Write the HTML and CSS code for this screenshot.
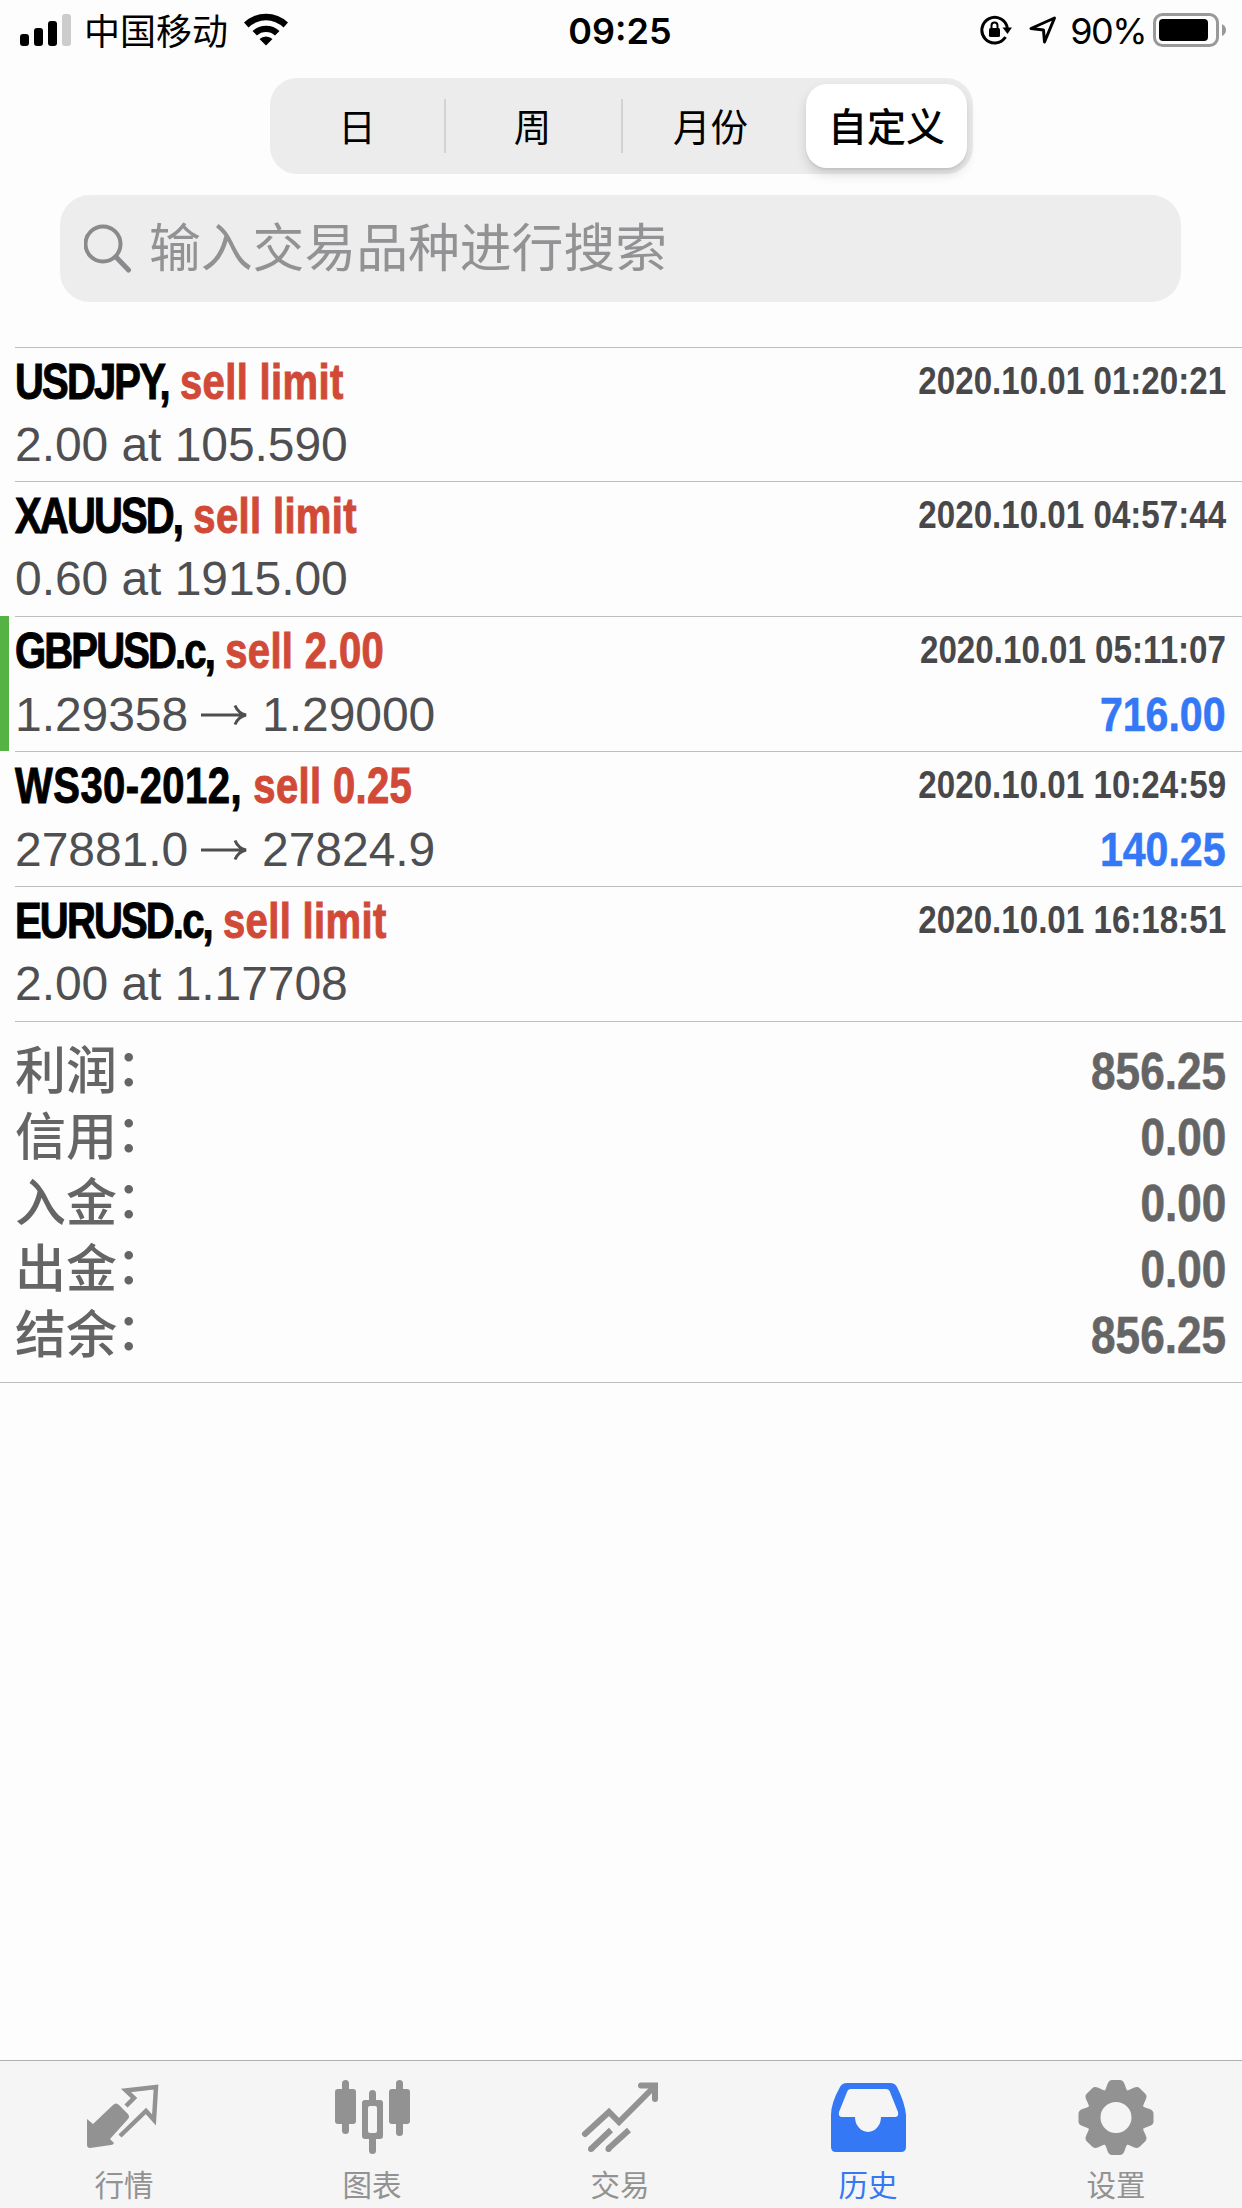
FILE: index.html
```html
<!DOCTYPE html>
<html lang="zh-CN">
<head>
<meta charset="utf-8">
<title>历史</title>
<link rel="stylesheet" href="styles.css">
</head>
<body>
<div class="app">
  <header class="status">
    <div class="status-side">
      <svg class="signal" width="52" height="34" viewBox="0 0 52 34"><rect x="0" y="21" width="9" height="12" rx="3"/><rect x="14" y="15" width="9" height="18" rx="3"/><rect x="28" y="8" width="9" height="25" rx="3"/><rect x="42" y="1" width="9" height="32" rx="3" fill="#ccc"/></svg>
      <span class="carrier">中国移动</span>
      <svg class="wifi" width="46" height="34" viewBox="0 0 46 34"><path d="M1 9.500A32 32 0 0 1 45 9.500L40.500 14.500A25 25 0 0 0 5.500 14.500ZM9.500 18A20 20 0 0 1 36.500 18L32 22.500A13.500 13.500 0 0 0 14 22.500ZM16.500 26A9.500 9.500 0 0 1 29.500 26L23 32.500Z"/></svg>
    </div>
    <div class="clock">09:25</div>
    <div class="status-side right">
      <svg width="33" height="30" viewBox="0 0 33 30"><path d="M25.500 22A12.800 12.800 0 1 1 27.300 13" fill="none" stroke="#000" stroke-width="3"/><path d="M22.500 12.500H32L27.500 19Z"/><rect x="9" y="13" width="11" height="9" rx="1.500"/><path d="M11.500 13V10.500a3 3 0 0 1 6 0V13" fill="none" stroke="#000" stroke-width="2"/></svg>
      <svg class="location" width="28" height="28" viewBox="0 0 28 28"><path d="M2 12.500L25.500 2L15.500 26L14.500 14Z" fill="none" stroke="#000" stroke-width="3" stroke-linejoin="round"/></svg>
      <span class="percent">90%</span>
      <svg class="battery" width="75" height="34" viewBox="0 0 75 34"><rect x="1.500" y="1.500" width="63" height="31" rx="8" fill="none" stroke="#999" stroke-width="3"/><rect x="6" y="6" width="49" height="22" rx="4"/><path d="M69 11q4 2 4 6t-4 6Z" fill="#999"/></svg>
    </div>
  </header>

  <nav class="segments">
    <span class="segment">日</span>
    <span class="segment divided">周</span>
    <span class="segment divided">月份</span>
    <span class="segment selected">自定义</span>
  </nav>

  <div class="search">
    <svg width="50" height="50" viewBox="0 0 50 50"><circle cx="19" cy="20" r="17.500" fill="none" stroke="#8a8a8d" stroke-width="4"/><path d="M32 33L44.500 46" stroke="#8a8a8d" stroke-width="5" stroke-linecap="round"/></svg>
    <span>输入交易品种进行搜索</span>
  </div>

  <main class="deals">
    <article class="deal">
      <div class="line head"><span class="title"><b class="symbol">USDJPY,</b> <b class="side">sell limit</b></span><time>2020.10.01 01:20:21</time></div>
      <div class="line prices"><span>2.00 at 105.590</span></div>
    </article>
    <article class="deal">
      <div class="line head"><span class="title"><b class="symbol">XAUUSD,</b> <b class="side">sell limit</b></span><time>2020.10.01 04:57:44</time></div>
      <div class="line prices"><span>0.60 at 1915.00</span></div>
    </article>
    <article class="deal marked">
      <div class="line head"><span class="title"><b class="symbol">GBPUSD.c,</b> <b class="side">sell 2.00</b></span><time>2020.10.01 05:11:07</time></div>
      <div class="line prices"><span>1.29358<svg class="arrow" width="46" height="22" viewBox="0 0 46 22"><path d="M0 11H44M34 1.500Q37 9 45 11Q37 13 34 20.500"/></svg>1.29000</span><strong class="profit">716.00</strong></div>
    </article>
    <article class="deal">
      <div class="line head"><span class="title"><b class="symbol wide">WS30-2012,</b> <b class="side">sell 0.25</b></span><time>2020.10.01 10:24:59</time></div>
      <div class="line prices"><span>27881.0<svg class="arrow" width="46" height="22" viewBox="0 0 46 22"><path d="M0 11H44M34 1.500Q37 9 45 11Q37 13 34 20.500"/></svg>27824.9</span><strong class="profit">140.25</strong></div>
    </article>
    <article class="deal">
      <div class="line head"><span class="title"><b class="symbol">EURUSD.c,</b> <b class="side">sell limit</b></span><time>2020.10.01 16:18:51</time></div>
      <div class="line prices"><span>2.00 at 1.17708</span></div>
    </article>
  </main>

  <section class="summary">
    <div class="total"><span>利润<i>：</i></span><strong>856.25</strong></div>
    <div class="total"><span>信用<i>：</i></span><strong>0.00</strong></div>
    <div class="total"><span>入金<i>：</i></span><strong>0.00</strong></div>
    <div class="total"><span>出金<i>：</i></span><strong>0.00</strong></div>
    <div class="total"><span>结余<i>：</i></span><strong>856.25</strong></div>
  </section>

  <footer class="tabs">
    <div class="tab"><svg width="80" height="80" viewBox="0 0 80 80"><path d="M3 39L9 44L29 25Q32 22 35 25L44 34Q46 37 44 39L26 59L30 63Q29 65 27 65L6 68Q3 68 3 65Z" fill="#929292"/><path d="M42 26L50 18L42 10.500L72 7L70 40L62 31L36 56" fill="none" stroke="#929292" stroke-width="4.500"/></svg><span>行情</span></div>
    <div class="tab"><svg width="80" height="80" viewBox="0 0 80 80"><g fill="#929292"><rect x="3" y="9" width="21" height="35" rx="3"/><rect x="10" y="0" width="7" height="54" rx="3.500"/><rect x="57" y="9" width="21" height="35" rx="3"/><rect x="64" y="0" width="7" height="56" rx="3.500"/><rect x="37" y="10" width="7" height="16" rx="3.500"/><rect x="37" y="54" width="7" height="20" rx="3.500"/><path fill-rule="evenodd" d="M32 20H48Q51 20 51 23V56Q51 59 48 59H33Q30 59 30 56V23Q30 20 33 20ZM38 26Q36 26 36 28V51Q36 53 38 53H43Q45 53 45 51V28Q45 26 43 26Z"/></g></svg><span>图表</span></div>
    <div class="tab"><svg width="80" height="80" viewBox="0 0 80 80"><path d="M5 54L29 32L39 42L74 7M61 5.500H75V19" fill="none" stroke="#929292" stroke-width="6" stroke-linecap="round"/><path d="M11 69L31 50M28 69L49 50" fill="none" stroke="#929292" stroke-width="6"/><circle cx="11" cy="69" r="3"/><circle cx="28.500" cy="69" r="3"/></svg><span>交易</span></div>
    <div class="tab active"><svg width="80" height="80" viewBox="0 0 80 80"><path fill="#3478f6" fill-rule="evenodd" d="M19 3H62Q67 3 69 7Q77 23 78 35V67Q78 72 73 72H8Q3 72 3 67V35Q3 23 12 7Q14 3 19 3ZM23 9Q20 9 19 12L11 32Q10 37 14 37H27A13 15 0 0 0 53 37H67Q71 37 70 32L62 12Q61 9 58 9Z"/></svg><span>历史</span></div>
    <div class="tab"><svg width="80" height="80" viewBox="0 0 80 80"><g fill="#929292"><circle cx="40" cy="37.500" r="22" fill="none" stroke="#929292" stroke-width="13"/><g id="teeth"><path id="tooth" d="M28 12Q30 9 31.500 4Q33 0 36 0H44Q47 0 48.500 4Q50 9 52 12Z"/><use href="#tooth" transform="rotate(45 40 37.500)"/><use href="#tooth" transform="rotate(90 40 37.500)"/><use href="#tooth" transform="rotate(135 40 37.500)"/></g><use href="#teeth" transform="rotate(180 40 37.500)"/></g></svg><span>设置</span></div>
  </footer>
</div>
</body>
</html>
```
FILE: styles.css
```css
* { box-sizing: border-box; }
body {
  margin: 0;
  background: #fdfdfd;
  color: #000;
  font-family: "Liberation Sans", "Noto Sans CJK SC", sans-serif;
}
svg { display: block; flex: none; }
.app { width: 1242px; height: 2208px; display: flex; flex-direction: column; }

.status { height: 78px; padding: 0 14px 18px 20px; display: flex; align-items: center; font-size: 36px; line-height: 60px; }
.status-side { flex: 1 1 0; display: flex; align-items: center; }
.status-side.right { justify-content: flex-end; }
.carrier { margin-left: 12px; padding-top: 5px; }
.wifi { margin-left: 15px; }
.clock { margin: 0 4px 0 -4px; padding-top: 2px; font-family: Inter, sans-serif; font-weight: 600; font-size: 36px; }
.location { margin-left: 16px; }
.percent { margin-left: 13px; padding-top: 2px; font-family: Inter, sans-serif; letter-spacing: -1.500px; }
.battery { margin-left: 7px; }

.segments { width: 703px; height: 96px; margin-left: 270px; padding: 6px 6px 6px 0; display: flex; align-items: center; background: #ececec; border-radius: 27px; font-size: 37.500px; }
.segment { height: 54px; width: 177px; line-height: 58px; text-align: center; }
.segment:first-child { width: 174px; }
.segment.divided { border-left: 2px solid #d2d2d4; }
.segment.divided:nth-child(2) { padding-right: 2px; }
.segment.selected { flex: 1; margin-left: 8px; height: 84px; line-height: 88px; background: #fff; border-radius: 21px; font-weight: 500; font-size: 39px; box-shadow: 0 6px 12px rgba(0,0,0,.14), 0 2px 2px rgba(0,0,0,.06); }

.search { height: 107px; margin: 21px 61px 0 60px; padding: 0 24px; display: flex; align-items: center; gap: 15px; border-radius: 30px; background: #ededed; color: #929294; font-size: 51.800px; line-height: 100px; }

.deals { margin-top: 45px; }
.deal { height: 135px; padding: 2px 16px 0 0; margin-left: 15px; border-top: 1px solid #bfbfc1; }
.deal:first-child { height: 134px; }
.deal.marked { margin-left: 0; padding-left: 15px; border-top: 0; padding-top: 3px; background: linear-gradient(#bfbfc1, #bfbfc1) 15px 0 / 100% 1px no-repeat, linear-gradient(#55b345, #55b345) 0 0 / 9px 100% no-repeat; }
.deal:last-child { height: 136px; border-bottom: 1px solid #bfbfc1; }
.line { display: flex; justify-content: space-between; align-items: baseline; white-space: pre; }
.head { height: 64px; line-height: 64px; font-weight: 700; }
/* condensed bold face, drawn by narrowing the regular-width one */
.title { font-size: 50px; transform: scaleX(.8); transform-origin: left; -webkit-text-stroke: 1px currentColor; }
.symbol { letter-spacing: -2.300px; }
.symbol.wide { letter-spacing: .600px; }
.side { color: #d14a38; letter-spacing: .450px; -webkit-text-stroke: 1px #d14a38; }
.head time { color: #48484a; font-size: 39px; line-height: 62px; align-self: flex-start; transform: scaleX(.85); transform-origin: right; }
.prices { height: 62px; line-height: 62px; color: #4f4f51; font-size: 48px; letter-spacing: -.060px; }
.arrow { display: inline-block; margin: 0 15px 5px 13px; fill: none; stroke: #4f4f51; stroke-width: 3; }
.profit { color: #3478f6; font-size: 49px; transform: scaleX(.84); transform-origin: right; -webkit-text-stroke: .600px #3478f6; }

.summary { height: 361px; padding: 17px 16px 0 15px; border-bottom: 1px solid #bfbfc1; color: #656565; }
.total { height: 66px; display: flex; justify-content: space-between; line-height: 66px; font-size: 51px; font-weight: 500; }
.total i { display: inline-block; font-style: normal; transform: translate(-1px, -3px); }
.total strong { transform: scaleX(.865); transform-origin: right; -webkit-text-stroke: .600px #656565; }

.tabs { margin-top: auto; height: 148px; padding-right: 2px; display: flex; background: #f5f5f5; border-top: 1px solid #b2b2b4; color: #929292; fill: #929292; font-size: 29.500px; }
.tab { flex: 1; padding-top: 19px; display: flex; flex-direction: column; align-items: center; line-height: 44px; }
.tab span { margin-top: 4px; }
.tab.active { color: #3478f6; }
```
